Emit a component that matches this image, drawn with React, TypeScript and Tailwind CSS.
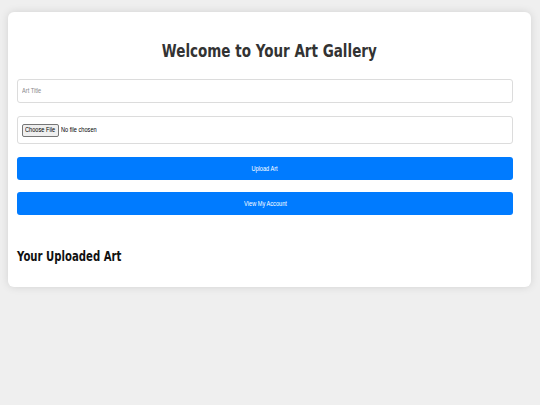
export default function App() {
  return (
    <div className="min-h-[405px] bg-[#efefef] pt-[12px] pl-[8px] font-['Liberation_Sans',Arial,sans-serif]">
      <div className="w-[523px] rounded-[6px] bg-white pl-[9px] pr-[9px] pt-[28px] pb-[23px] shadow-[0_0_8px_rgba(0,0,0,0.12)]">
        <h1 className="text-center text-[18px] leading-[21px] font-bold text-[#333] font-['DejaVu_Sans',sans-serif]">
          <span className="inline-block scale-x-75 origin-center whitespace-nowrap">Welcome to Your Art Gallery</span>
        </h1>

        <div className="mt-[18px] flex h-[24px] w-[496px] items-center rounded-[3px] border border-[#dcdcdc] pl-[4px]">
          <span className="inline-block scale-x-75 origin-left text-[7.5px] text-[#8a8a8a]">Art Title</span>
        </div>

        <div className="mt-[13px] flex h-[28px] w-[496px] items-center rounded-[3px] border border-[#dcdcdc] pl-[4px]">
          <div className="flex h-[13px] w-[37px] items-center justify-center rounded-[2px] border border-[#767676] bg-[#efefef]">
            <span className="inline-block scale-x-75 origin-center whitespace-nowrap text-[7.5px] text-black">Choose File</span>
          </div>
          <span className="ml-[2px] inline-block scale-x-75 origin-left whitespace-nowrap text-[7.5px] text-black">No file chosen</span>
        </div>

        <button className="mt-[13px] flex h-[23px] w-[496px] items-center justify-center rounded-[3px] bg-[#007bff] text-white">
          <span className="inline-block scale-x-75 origin-center whitespace-nowrap text-[7.5px]">Upload Art</span>
        </button>

        <button className="mt-[12px] flex h-[23px] w-[496px] items-center justify-center rounded-[3px] bg-[#007bff] text-white">
          <span className="inline-block scale-x-75 origin-center whitespace-nowrap text-[7.5px]">View My Account</span>
        </button>

        <h2 className="mt-[33px] text-[13.5px] leading-[16px] font-bold text-[#111] font-['DejaVu_Sans',sans-serif]">
          <span className="inline-block scale-x-75 origin-left whitespace-nowrap">Your Uploaded Art</span>
        </h2>
      </div>
    </div>
  );
}
